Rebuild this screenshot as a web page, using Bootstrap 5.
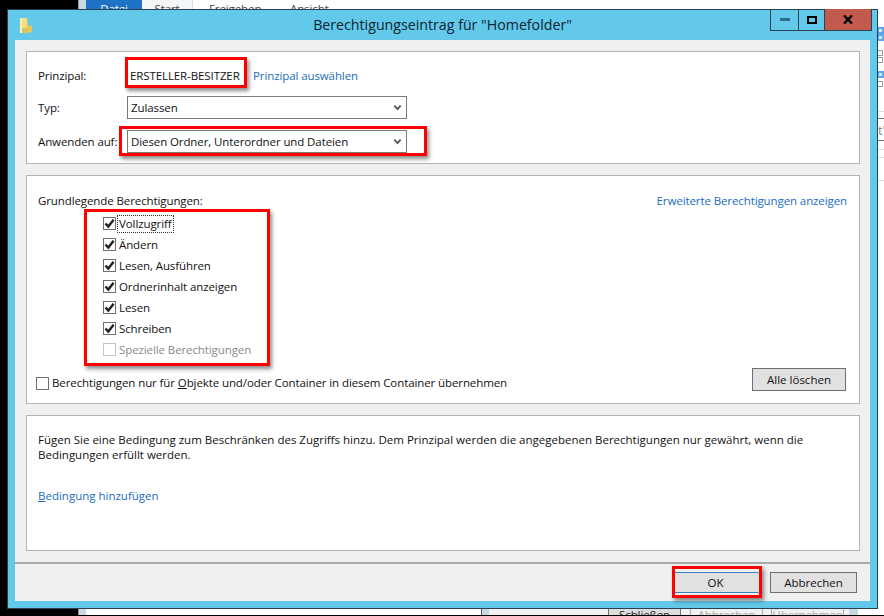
<!DOCTYPE html>
<html lang="de">
<head>
<meta charset="utf-8">
<title>Berechtigungseintrag</title>
<link href="https://cdn.jsdelivr.net/npm/bootstrap@5.3.0/dist/css/bootstrap.min.css" rel="stylesheet">
<style>
html,body{height:100%;}
body{background:#000;margin:0;overflow:hidden;font-family:"Open Sans","Noto Sans",sans-serif;font-size:11.5px;letter-spacing:-.1px;line-height:16px;color:#111;}
.desk{position:relative;width:884px;height:616px;overflow:hidden;}
.behind{position:absolute;left:78px;top:0;width:806px;height:615px;background:#fff;overflow:hidden;}
.behind-edge{position:absolute;left:0;top:0;bottom:0;width:8px;background:#c8d9e1;border-left:1px solid #8a979e;}
.ribbon{position:absolute;left:8px;top:0;height:12px;}
.rtab{height:12px;line-height:17px;text-align:center;font-size:11.5px;color:#444;overflow:hidden;}
.rtab-file{width:56px;background:#1f72c6;color:#fff;}
.rtab-start{width:51px;background:#f5f6f7;border-right:1px solid #ddd;}
.rtab-a{margin-left:16px;width:65px;text-align:left;}
.rtab-b{margin-left:16px;width:60px;text-align:left;}
.side-bit{position:absolute;left:799px;width:6px;height:6px;border:1px solid #999;background:#fff;}
.side-bit.on{border:2px solid #5aa7f0;background:#d7ebff;width:7px;height:7px;}
.s1{top:27px}.s2{top:34px}.s3{top:50px}.s4{top:57px}.s5{top:71px}.s6{top:81px}
.side-line{position:absolute;left:800px;width:6px;height:1px;background:#ddd;}
.l1{top:111px}.l2{top:118px;background:#777}.l3{top:140px;background:#777}.l4{top:149px}.l5{top:157px}.l6{top:180px}
.side-txt{position:absolute;left:800px;top:122px;color:#888;font-size:13px;}
.behind-low{position:absolute;left:403px;top:605px;height:10px;width:377px;overflow:hidden;background:#f2f2f2;border-left:1px solid #555;}
.low-edge{width:7px;background:#c8d9e1;}
.low-btn{height:12px;text-align:center;font-size:11.5px;line-height:11px;margin-top:4px;color:#aaa;border-left:1px solid #aaa;border-right:1px solid #aaa;}
.low-close{margin-left:119px;width:73px;background:#ddd;color:#222;border-color:#777;}
.low-abort{margin-left:9px;width:73px;}
.low-apply{margin-left:8px;width:73px;}
.low-pale{margin-left:5px;width:9px;background:#c8d9e1;}

.dlg{position:absolute;left:7px;top:9px;width:871px;height:600px;background:#63c9ea;border:1px solid #29404d;display:flex;flex-direction:column;}
.dlg-bar{position:relative;height:30px;flex:none;}
.dlg-title{line-height:30px;text-align:center;font-size:14.2px;letter-spacing:0;color:#0d2431;}
.dlg-icon{position:absolute;left:10px;top:7px;}
.wbtns{position:absolute;right:5px;top:-1px;height:22px;border:1px solid #2a4351;border-top:0;display:flex;}
.wb{height:21px;display:flex;align-items:center;justify-content:center;border-right:1px solid #2a4351;}
.wb:last-child{border-right:0;}
.wb-min{width:28px;}
.wb-max{width:26px;}
.wb-close{width:46px;background:#c25b4e;}
.panel{flex:1;margin:0 7px 7px;background:#f0f0f0;display:flex;flex-direction:column;}
.sections{padding:11px 10px 11px 11px;display:flex;flex-direction:column;gap:11px;}
.pane{background:#fff;border:1px solid #b4b4b4;border-radius:0;padding:0 12px 0 11px;flex:none;}
.pane-a{height:113px;padding-top:13px;}
.pane-b{height:229px;padding-top:17px;}
.pane-c{height:136px;padding-top:16px;}
.frow{display:flex;align-items:center;height:23px;}
.frow-top{padding-bottom:2px;}
.frow-gap{margin-top:11px;}
.flabel{width:89px;flex:none;white-space:nowrap;}
.fval{padding-left:3px;width:126px;flex:none;white-space:nowrap;}
.alink{color:#1a6cc0;text-decoration:none;white-space:nowrap;}
.form-select.wsel{width:280px;height:23px;min-height:0;padding:0 0 0 3px;border:1px solid #7a7a7a;border-radius:0;font-size:11.5px;letter-spacing:-.1px;line-height:21px;color:#111;background-position:right 4px center;background-size:9px 7px;box-shadow:none;background-image:url("data:image/svg+xml,%3Csvg xmlns='http://www.w3.org/2000/svg' viewBox='0 0 11 9'%3E%3Cpath d='M1.5 2 5.5 6.5 9.5 2' fill='none' stroke='%23555' stroke-width='2.4'/%3E%3C/svg%3E");}
.perm-list{margin:4px 0 0 65px;}
.perm{display:flex;align-items:center;height:21px;margin:0;padding:0;min-height:0;}
.form-check-input.wchk{width:13px;height:13px;margin:0 3px 0 0;float:none;flex:none;border:1px solid #707070;border-radius:0;background-color:#fff;opacity:1;box-shadow:none;}
.form-check-input.wchk:checked{background-color:#fff;border-color:#707070;background-size:11px 11px;background-image:url("data:image/svg+xml,%3Csvg xmlns='http://www.w3.org/2000/svg' viewBox='0 0 11 11'%3E%3Cpath d='M1.5 5.5 4.3 8.6 9.6 1.8' fill='none' stroke='%23222' stroke-width='2.4'/%3E%3C/svg%3E");}
.form-check-input.wchk:disabled{border-color:#c4c4c4;}
.perm-off{color:#8a8a8a;opacity:1!important;}
.form-check-label{opacity:1!important;}
.perm-focus{outline:1px dotted #333;padding:0 1px;margin-left:-1px;}
.inherit-row{margin:8px 0 0 -2px;display:flex;align-items:flex-end;justify-content:space-between;padding-right:1px;}
.inherit{display:flex;align-items:center;padding:0;height:16px;margin:0;min-height:0;}
.btn.wbtn{border-radius:0;background:#e1e1e1;border:1px solid #6f6f6f;color:#111;font-size:11.5px;line-height:16px;padding:0;box-shadow:none;}
.wbtn-clear{width:94px;height:23px;}
.wbtn-foot{width:87px;height:21px;}
.foot{flex:1;border-top:2px solid #aaa;display:flex;justify-content:flex-end;gap:11px;padding:8px 13px 0 0;}
.btn.wbtn-ok{border-color:#3a7fc1 #e1e1e1;}
.note{white-space:nowrap;line-height:15px;letter-spacing:0;}
.cond-link{display:block;margin-top:26px;color:#1a6cc0;text-decoration:none;letter-spacing:0;}
.mk{position:absolute;border:3px solid #f00;box-shadow:2px 3px 4px rgba(0,0,0,.45);pointer-events:none;}
.mk-1{left:117px;top:47px;width:122px;height:31px;}
.mk-2{left:111px;top:116px;width:308px;height:30px;}
.mk-3{left:76px;top:199px;width:186px;height:157px;}
.mk-4{left:664px;top:556px;width:90px;height:32px;}
</style>
</head>
<body>
<div class="desk">
  <div class="behind">
    <div class="behind-edge"></div>
    <div class="ribbon d-flex">
      <div class="rtab rtab-file">Datei</div>
      <div class="rtab rtab-start">Start</div>
      <div class="rtab rtab-a">Freigeben</div>
      <div class="rtab rtab-b">Ansicht</div>
    </div>
    <span class="side-bit on s1"></span><span class="side-bit on s2"></span><span class="side-bit s3"></span><span class="side-bit s4"></span><span class="side-bit on s5"></span><span class="side-bit s6"></span>
    <span class="side-line l1"></span><span class="side-line l2"></span><span class="side-line l3"></span><span class="side-line l4"></span><span class="side-line l5"></span><span class="side-line l6"></span>
    <span class="side-txt">t'</span>
    <div class="behind-low d-flex">
      <div class="low-edge"></div>
      <div class="low-btn low-close">Schließen</div>
      <div class="low-btn low-abort">Abbrechen</div>
      <div class="low-btn low-apply">Übernehmen</div>
      <div class="low-pale"></div>
    </div>
  </div>

  <div class="dlg">
    <div class="dlg-bar">
      <svg class="dlg-icon" width="15" height="17" viewBox="0 0 15 17"><path d="M2 1h7v15H2z" fill="#f3df7c"/><path d="M9 1l1 7 4 1v6l-5 1z" fill="#e3c75c"/><path d="M2 1h2v15H2z" fill="#fbf0b0"/><path d="M4 11h6v5H4z" fill="#d9c469"/></svg>
      <div class="dlg-title">Berechtigungseintrag für "Homefolder"</div>
      <div class="wbtns">
        <div class="wb wb-min"><svg width="10" height="3"><rect width="10" height="3" fill="#2b6f88"/></svg></div>
        <div class="wb wb-max"><svg width="10" height="8"><path d="M1 1h8v6H1z" fill="none" stroke="#000" stroke-width="2"/></svg></div>
        <div class="wb wb-close"><svg width="10" height="9" viewBox="0 0 10 9"><path d="M1 .5 9 8.5M9 .5 1 8.5" stroke="#000" stroke-width="2.4"/></svg></div>
      </div>
    </div>
    <div class="panel">
      <div class="sections">
        <div class="card pane pane-a">
          <div class="frow frow-top mb-2">
            <span class="flabel">Prinzipal:</span>
            <span class="fval">ERSTELLER-BESITZER</span>
            <a class="alink" href="#">Prinzipal auswählen</a>
          </div>
          <div class="frow">
            <label class="flabel" for="typ">Typ:</label>
            <select class="form-select wsel" id="typ"><option>Zulassen</option></select>
          </div>
          <div class="frow frow-gap">
            <label class="flabel" for="scope">Anwenden auf:</label>
            <select class="form-select wsel" id="scope"><option>Diesen Ordner, Unterordner und Dateien</option></select>
          </div>
        </div>

        <div class="card pane pane-b">
          <div class="d-flex justify-content-between">
            <span>Grundlegende Berechtigungen:</span>
            <a class="alink" href="#">Erweiterte Berechtigungen anzeigen</a>
          </div>
          <div class="perm-list">
            <div class="form-check perm"><input class="form-check-input wchk" type="checkbox" id="p1" checked><label class="form-check-label perm-focus" for="p1">Vollzugriff</label></div>
            <div class="form-check perm"><input class="form-check-input wchk" type="checkbox" id="p2" checked><label class="form-check-label" for="p2">Ändern</label></div>
            <div class="form-check perm"><input class="form-check-input wchk" type="checkbox" id="p3" checked><label class="form-check-label" for="p3">Lesen, Ausführen</label></div>
            <div class="form-check perm"><input class="form-check-input wchk" type="checkbox" id="p4" checked><label class="form-check-label" for="p4">Ordnerinhalt anzeigen</label></div>
            <div class="form-check perm"><input class="form-check-input wchk" type="checkbox" id="p5" checked><label class="form-check-label" for="p5">Lesen</label></div>
            <div class="form-check perm"><input class="form-check-input wchk" type="checkbox" id="p6" checked><label class="form-check-label" for="p6">Schreiben</label></div>
            <div class="form-check perm"><input class="form-check-input wchk" type="checkbox" id="p7" disabled><label class="form-check-label perm-off" for="p7">Spezielle Berechtigungen</label></div>
          </div>
          <div class="inherit-row">
            <div class="form-check inherit"><input class="form-check-input wchk" type="checkbox" id="inh"><label class="form-check-label" for="inh">Berechtigungen nur für <u>O</u>bjekte und/oder Container in diesem Container übernehmen</label></div>
            <button type="button" class="btn wbtn wbtn-clear">Alle löschen</button>
          </div>
        </div>

        <div class="card pane pane-c">
          <div class="note">Fügen Sie eine Bedingung zum Beschränken des Zugriffs hinzu. Dem Prinzipal werden die angegebenen Berechtigungen nur gewährt, wenn die<br>Bedingungen erfüllt werden.</div>
          <a class="cond-link" href="#"><u>B</u>edingung hinzufügen</a>
        </div>
      </div>
      <div class="foot">
        <button type="button" class="btn wbtn wbtn-foot wbtn-ok">OK</button>
        <button type="button" class="btn wbtn wbtn-foot">Abbrechen</button>
      </div>
    </div>
    <div class="mk mk-1"></div>
    <div class="mk mk-2"></div>
    <div class="mk mk-3"></div>
    <div class="mk mk-4"></div>
  </div>
</div>
<script src="https://cdn.jsdelivr.net/npm/bootstrap@5.3.0/dist/js/bootstrap.bundle.min.js"></script>
</body>
</html>
